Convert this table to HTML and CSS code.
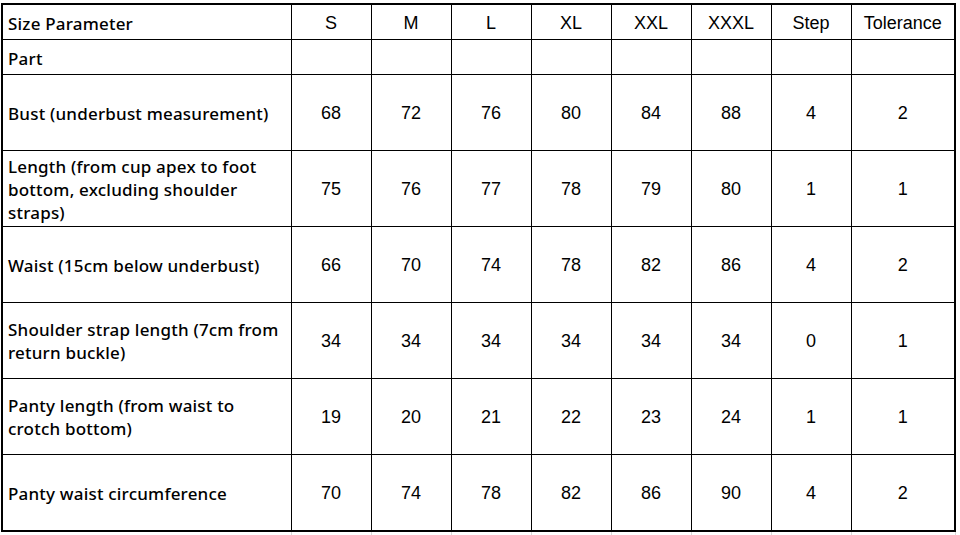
FILE: index.html
```html
<!DOCTYPE html>
<html>
<head>
<meta charset="utf-8">
<link rel="stylesheet" href="styles.css">
</head>
<body>
<div class="sheet">
<table class="size-table">
<colgroup>
<col class="c-part"><col class="c-num"><col class="c-num"><col class="c-num"><col class="c-num"><col class="c-num"><col class="c-num"><col class="c-num"><col class="c-tol">
</colgroup>
<tr class="head">
<td class="label">Size Parameter</td><td>S</td><td>M</td><td>L</td><td>XL</td><td>XXL</td><td>XXXL</td><td>Step</td><td>Tolerance</td>
</tr>
<tr class="head">
<td class="label">Part</td><td></td><td></td><td></td><td></td><td></td><td></td><td></td><td></td>
</tr>
<tr>
<td class="label">Bust (underbust measurement)</td><td>68</td><td>72</td><td>76</td><td>80</td><td>84</td><td>88</td><td>4</td><td>2</td>
</tr>
<tr>
<td class="label">Length (from cup apex to foot bottom, excluding shoulder straps)</td><td>75</td><td>76</td><td>77</td><td>78</td><td>79</td><td>80</td><td>1</td><td>1</td>
</tr>
<tr>
<td class="label">Waist (15cm below underbust)</td><td>66</td><td>70</td><td>74</td><td>78</td><td>82</td><td>86</td><td>4</td><td>2</td>
</tr>
<tr>
<td class="label">Shoulder strap length (7cm from return buckle)</td><td>34</td><td>34</td><td>34</td><td>34</td><td>34</td><td>34</td><td>0</td><td>1</td>
</tr>
<tr>
<td class="label">Panty length (from waist to crotch bottom)</td><td>19</td><td>20</td><td>21</td><td>22</td><td>23</td><td>24</td><td>1</td><td>1</td>
</tr>
<tr>
<td class="label">Panty waist circumference</td><td>70</td><td>74</td><td>78</td><td>82</td><td>86</td><td>90</td><td>4</td><td>2</td>
</tr>
</table>
<div class="grid-tail">
<span class="g-part"></span><span class="g-num"></span><span class="g-num"></span><span class="g-num"></span><span class="g-num"></span><span class="g-num"></span><span class="g-num"></span><span class="g-num"></span><span class="g-tol"></span>
</div>
</div>
</body>
</html>
```
FILE: styles.css
```css
html, body {
  margin: 0;
  padding: 0;
  background: #fff;
}
.sheet {
  padding: 3px 0 0 1px;
}
.size-table {
  border-collapse: collapse;
  table-layout: fixed;
  width: 953px;
  border: 2px solid #000;
  font-family: "Liberation Sans", Arial, sans-serif;
  font-size: 18px;
  color: #000;
}
.c-part { width: 289px; }
.c-num { width: 80px; }
.c-tol { width: 104px; }
.size-table td {
  border: 1px solid #000;
  text-align: center;
  vertical-align: middle;
  padding: 1px 0 0 0;
  height: 74px;
  line-height: 23px;
}
.size-table tr.head td {
  height: 32px;
  padding-top: 2px;
}
.size-table td.label {
  text-align: left;
  padding-left: 5px;
  padding-right: 9px;
  font-family: "Noto Sans", "Open Sans", sans-serif;
  font-weight: 500;
  font-size: 17px;
  letter-spacing: 0.2px;
}
.grid-tail {
  display: flex;
  height: 6px;
  padding-left: 2px;
}
.grid-tail span {
  border-right: 1px solid #d9d9d9;
  height: 6px;
  box-sizing: border-box;
}
.g-part { width: 289px; }
.g-num { width: 80px; }
.g-tol { width: 104px; }
```
